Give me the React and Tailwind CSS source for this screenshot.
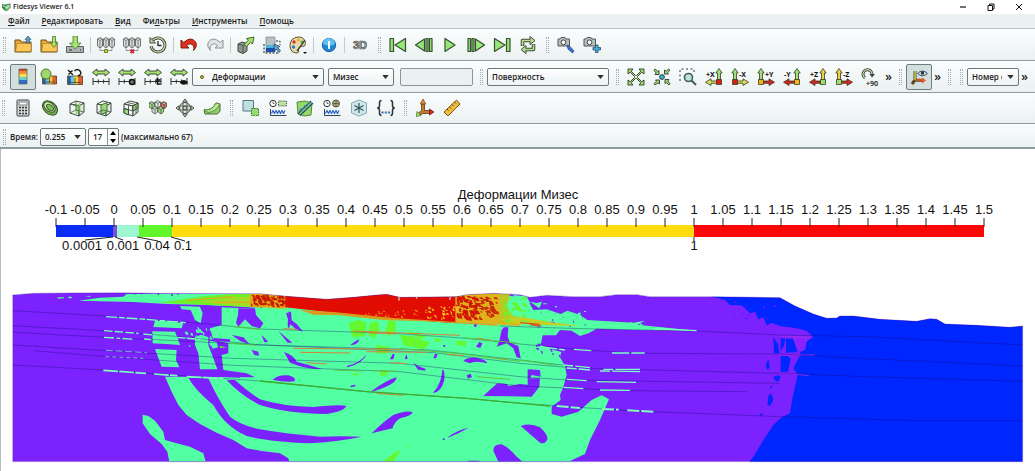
import React from 'react';

const OUT = '#3f4a3f';
const LIME = '#a6e36e';

const Icon = ({ children }) => (
    <svg viewBox="0 0 18 18" className="w-[18px] h-[18px] shrink-0" fill="none" stroke={OUT} strokeWidth="1" strokeLinejoin="round">{children}</svg>
);

const FolderShape = () => (
    <>
        <path d="M1 16V4h5l1.500 2H17v10z" fill="#e9a93a" stroke="#6b4a14" />
        <path d="M1.500 15.500L3 7.500h14v8z" fill="#fbc75a" stroke="#a3741d" strokeWidth=".6" />
    </>
);

const Cube = ({ front = '#eef3ee', side = '#dfe8df', top = '#f7faf7' }) => (
    <>
        <path d="M2 5l6-3 8 2-5 3z" fill={top} />
        <path d="M2 5l9 2v10l-9-3z" fill={front} />
        <path d="M11 7l5-3v9l-5 4z" fill={side} />
    </>
);

const Servers = () => (
    <>
        {[0.5, 6.5, 12.5].map((x) => (
            <g key={x}>
                <path d={`M${x} 3l2.500-1.500L${x + 5} 3v7l-2.500 2L${x} 10z`} fill="#d5dada" stroke="#555" strokeWidth=".8" />
                <path d={`M${x} 3l2.500 1.500L${x + 5} 3M${x + 2.5} 4.500V12`} stroke="#666" strokeWidth=".7" />
            </g>
        ))}
    </>
);

const ColorSwatch = ({ x, y, w, h }) => (
    <g stroke="none">
        <rect x={x} y={y} width={w} height={h} fill="#2a5caa" />
        <rect x={x + w * 0.22} y={y} width={w * 0.26} height={h} fill="#65c7d8" />
        <rect x={x + w * 0.44} y={y} width={w * 0.3} height={h} fill="#f5cf3c" />
        <rect x={x + w * 0.72} y={y} width={w * 0.28} height={h} fill="#e0622a" />
        <rect x={x} y={y} width={w} height={h} fill="none" stroke="#4a3a2a" strokeWidth=".7" />
        <path d={`M${x + 2} ${y + h - 2}h${w - 4}M${x + w / 2} ${y + 2}v${h - 3}`} stroke="#333" strokeWidth=".7" />
    </g>
);

const RangeIcon = ({ badge }) => (
    <Icon>
        <path d="M0.500 4.500L5 1v2h8V1l4.500 3.500L13 8V6H5v2z" fill={LIME} />
        <path d="M1 10v7M17 10v7M1 13.500h16M6.300 11.500v4M11.600 11.500v4" stroke="#333" />
        {badge === 'custom' && <circle cx="14" cy="14" r="2.500" fill="#777" stroke="#111" strokeWidth="1.400" />}
        {badge === 'time' && <path d="M13.500 9.500v6.500h3M12 12h4.500" stroke="#111" strokeWidth="1.700" />}
        {badge === 'visible' && <path d="M10 14.500q3.500-4 7.500 0q-4 3.500-7.500 0z" fill="#111" stroke="#111" />}
    </Icon>
);

const PlayTri = ({ d }) => <path d={d} fill="#98e67a" stroke="#36502f" strokeWidth="1.200" />;

const Camera = () => (
    <>
        <path d="M1 3h2l1-1.500h4L9 3h3.500v7H1z" fill="#b9c0c0" stroke="#555" />
        <circle cx="6.500" cy="6.300" r="2.400" fill="#f3f6f6" stroke="#444" />
    </>
);

const ArrowOut = ({ turn, inward }) => (
    <g transform={`rotate(${turn} 9 9)`}>
        {inward
            ? <path d="M1 2.200L2.200 1l2.600 2.600L6 2.500V6.500H2l1.200-1.500z" fill={LIME} stroke="#2e332b" strokeWidth=".9" />
            : <path d="M7.500 8.500L3.200 4.200 1 6V1h5L4.200 3.200 8.500 7.500z" fill={LIME} stroke="#2e332b" strokeWidth=".9" />}
    </g>
);

const axisColors = {
    X: { box: '#dd1c14', up: '#9ddf7c', flat: '#d5df58' },
    Y: { box: '#f2b223', up: '#9ddf7c', flat: '#d3261e' },
    Z: { box: '#97e26e', up: '#e9d04a', flat: '#d3261e' },
};

function AxisIcon({ label, left }) {
    const c = axisColors[label[1]];
    return (
        <Icon>
            <g transform={left ? 'translate(18 0) scale(-1 1)' : undefined} stroke="#3b3a22" strokeWidth=".8">
                <path d="M5 13h7v-2.200l5.500 3.400L12 17.500v-2.200H5z" fill={c.flat} />
                <path d="M2.500 13V5H.800L4 .500 7.200 5H5.500v8z" fill={c.up} />
                <rect x="1.500" y="11.500" width="5" height="5" fill={c.box} />
            </g>
            <text x={left ? 1 : 8} y="8.500" fill="#111" stroke="none" className="text-[7px] font-bold font-['Noto_Sans']">{label}</text>
        </Icon>
    );
}

const ICONS = {
    open: <Icon><FolderShape /><path d="M14 0l3 3.500h-1.500V7h-3V3.500H11z" fill="#5b9cc2" stroke="#2b5e7c" strokeWidth=".7" /></Icon>,
    load: <Icon><FolderShape /><path d="M12.500.500h3V7h2L14 11.500 10.500 7h2z" fill={LIME} stroke="#4f7a2c" strokeWidth=".8" /></Icon>,
    save: <Icon><path d="M.500 10.500h17v6H.500z" fill="#a9b1b1" stroke="#5a6060" /><path d="M3 14h3M14 14h1" stroke="#333" /><path d="M7 0h4.500v7H15l-5.800 6L3.500 7H7z" fill={LIME} stroke="#4f7a2c" strokeWidth=".8" /></Icon>,
    connect: <Icon><Servers /><path d="M3 12.500v2h12v-2" stroke="#777" strokeWidth=".8" /><rect x="7.500" y="13.500" width="3" height="3" fill="#cddc39" stroke="#6f7d1c" /></Icon>,
    disconnect: <Icon><Servers /><path d="M3 12.500v2h12v-2" stroke="#777" strokeWidth=".8" /><path d="M7.500 13.500l3.500 3.500M11 13.500L7.500 17" stroke="#c4263a" strokeWidth="1.800" /></Icon>,
    history: <Icon><path d="M3.500 4.500A7 7 0 1 1 2 10" stroke="#454a3b" strokeWidth="3" /><path d="M3.500 4.500A7 7 0 1 1 2 10" stroke="#cfd8ae" strokeWidth="1.200" /><path d="M1 1.500v5.500h5.500z" fill="#cfd8ae" /><path d="M9 5v4.500h3.500" stroke="#333" strokeWidth="1.400" /></Icon>,
    undo: <Icon><path d="M1 4v8h8L6.500 9.500q4-3.500 7 .500 1 2 0 4.500 4-3.500 2.500-8Q11-.500 3.700 6.500z" fill="#e0301e" stroke="#7c1a10" /></Icon>,
    redo: <Icon><path d="M17 4v8H9l2.500-2.500q-4-3.500-7 .500-1 2 0 4.500Q.500 11 2 6.500 7-.500 14.300 6.500z" fill="#dfe5e5" stroke="#8a9393" /></Icon>,
    extract: <Icon><path d="M1 8l4-2 5 1.500v7.500l-4 2.500-5-2z" fill="#8b958d" /><path d="M1 8l5 1.500L10 7.500M6 9.500v8" strokeWidth=".8" /><path d="M7 8.500l4.500-4.300L9.500 2.500 17 1l-1.500 7-1.800-1.700L9.500 10.500z" fill={LIME} stroke="#42662c" /></Icon>,
    select: <Icon><rect x="3" y="1" width="9" height="15" fill="#b8c1c6" stroke="#777" strokeWidth=".6" /><rect x="3" y="9" width="9" height="3" fill="#4bb2d9" stroke="none" /><rect x="3" y="12" width="9" height="4" fill="#1d4fa8" stroke="none" /><path d="M1 8v9h14M13 5h4v4" stroke="#222" strokeDasharray="2 1.500" /><path d="M11 8l6 2.500-2.300 1L17.500 15l-1.800 1.500-2.500-3.500L11.500 15z" fill="#6fa0c9" stroke="#24486b" strokeWidth=".8" /></Icon>,
    palette: <Icon><path d="M9 1Q1 2 1 9.500T8 17q2.500-.300 1.500-3-.500-3 3-3.500 4 .500 4-3Q15.500.500 9 1z" fill="#e8d9a9" stroke="#5d5136" /><g stroke="none"><circle cx="5" cy="6" r="1.700" fill="#d8322a" /><circle cx="9.500" cy="4" r="1.600" fill="#f0b028" /><circle cx="4.500" cy="11" r="1.700" fill="#2f7ad0" /><circle cx="13" cy="6" r="1.500" fill="#4fae3c" /></g><path d="M8 15l8-11" stroke="#444" strokeWidth="1.300" /><path d="M14 16h4l-2 2z" fill="#111" stroke="none" /></Icon>,
    info: <Icon><circle cx="9" cy="9" r="6.700" fill="#1f86d6" stroke="#1762a3" /><path d="M3 8a6 6 0 0 1 12 0q-6 3-12 0z" fill="#62c0ef" stroke="none" /><path d="M9 5v8" stroke="#fff" strokeWidth="2" /></Icon>,
    stereo: <Icon><text x="2" y="13" fill="#a9b2b2" stroke="#3c3c3c" strokeWidth=".6" className="text-[11px] font-bold font-['Liberation_Sans']">3D</text></Icon>,
    first: <Icon><PlayTri d="M1 2.500h3.500v13H1z" /><PlayTri d="M16.500 2.500v13L6 9z" /></Icon>,
    prev: <Icon><PlayTri d="M9.500 3v12L.500 9z" /><PlayTri d="M11 2.500h2v13h-2zM14.500 2.500h2.500v13h-2.500z" /></Icon>,
    play: <Icon><PlayTri d="M4 2.500v13L14 9z" /></Icon>,
    next: <Icon><PlayTri d="M8.500 3v12l9-6z" /><PlayTri d="M1 2.500h2.500v13H1zM5 2.500h2v13H5z" /></Icon>,
    last: <Icon><PlayTri d="M13.500 2.500H17v13h-3.500z" /><PlayTri d="M1.500 2.500v13L12 9z" /></Icon>,
    loop: <Icon><path d="M3.500 10V4.500h8M14.500 8v5.500h-8" stroke="#3e4a34" strokeWidth="3.600" /><path d="M11 .500l5 4-5 4zM7 9.500l-5 4 5 4z" fill="#b9dd94" /><path d="M3.500 9.500V4.500h8M14.500 8.500v5h-8" stroke="#b9dd94" strokeWidth="1.600" /></Icon>,
    camFind: <Icon><Camera /><path d="M10 9l3 1.500 4 4.500-1.500 2-4.500-4z" fill="#3f6fd6" stroke="#243f8c" strokeWidth=".7" /></Icon>,
    camAdd: <Icon><Camera /><path d="M12.500 9h2.500v2.500h2.500V14H15v2.500h-2.500V14H10v-2.500h2.500z" fill="#48a6d6" stroke="#24506e" strokeWidth=".8" /></Icon>,

    legend: <Icon><g stroke="none"><rect x="5" y="1" width="8" height="3" fill="#d5432b" /><rect x="5" y="3" width="8" height="3" fill="#f0912f" /><rect x="5" y="6" width="8" height="3" fill="#f7dc55" /><rect x="5" y="9" width="8" height="3" fill="#6cd0c7" /><rect x="5" y="12" width="8" height="4" fill="#2d6fc6" /></g><rect x="5" y="1" width="8" height="15" stroke="#5a6060" strokeWidth=".7" /></Icon>,
    editMap: <Icon><ColorSwatch x={2.5} y={8} w={14} h={8} /><circle cx="6" cy="6" r="5" fill="#9fd86c" stroke="#4f7a2c" /></Icon>,
    rescale: <Icon><ColorSwatch x={1.5} y={8} w={15} h={8.5} /><path d="M2 2l5 5M2.500 6.500l4-4M8.500 3q3-3 5.500 0t-2 5" stroke="#1b1b1b" strokeWidth="1.400" /></Icon>,
    range: <RangeIcon />,
    rangeCustom: <RangeIcon badge="custom" />,
    rangeTime: <RangeIcon badge="time" />,
    rangeVisible: <RangeIcon badge="visible" />,
    reset: <Icon>{[0, 90, 180, 270].map((a) => <ArrowOut key={a} turn={a} />)}</Icon>,
    zoomData: <Icon>{[0, 90, 180, 270].map((a) => <ArrowOut key={a} turn={a} inward />)}<circle cx="9" cy="9" r="2.400" fill="#35b6ae" stroke="#246" /></Icon>,
    zoomBox: <Icon><path d="M1 13V1h14v4" stroke="#333" strokeDasharray="2 2.500" /><circle cx="9.500" cy="9.500" r="4" fill="#bfe3dd" stroke="#3c5f5a" strokeWidth="1.600" /><path d="M12.500 12.500l4.500 4.500" stroke="#4a5553" strokeWidth="2" /></Icon>,
    xPlus: <AxisIcon label="+X" left />,
    xMinus: <AxisIcon label="-X" />,
    yPlus: <AxisIcon label="+Y" />,
    yMinus: <AxisIcon label="-Y" left />,
    zPlus: <AxisIcon label="+Z" left />,
    zMinus: <AxisIcon label="-Z" />,
    rotate: <Icon><path d="M4 10A4.500 4.500 0 1 1 11 6.500" stroke="#3f463c" strokeWidth="3" /><path d="M4 10A4.500 4.500 0 1 1 11 6.500" stroke="#c3d6ab" strokeWidth="1.200" /><path d="M8.500 6h5.500l-3 3.500z" fill="#3f463c" stroke="none" /><text x="5" y="17.500" fill="#111" stroke="none" className="text-[7px] font-semibold font-['Noto_Sans']">+90</text></Icon>,
    axes: <Icon><path d="M5 3v9M5 12l9 .500M5 12l-3 4" stroke="#574a20" strokeWidth="3" /><path d="M5 3v9" stroke="#bcd85f" strokeWidth="1.500" /><path d="M5 12h8" stroke="#e0622a" strokeWidth="1.500" /><path d="M12 9.500l4 3-4 3z" fill="#e8572a" stroke="none" /><path d="M7.500 5.500q5-5 10 0q-5 4.500-10 0z" fill="#d6dede" stroke="#3c5068" /><circle cx="12.500" cy="5" r="1.700" fill="#25344a" stroke="none" /></Icon>,

    calculator: <Icon><rect x="3" y="1" width="12" height="16" rx="1" fill="#d4dada" stroke="#3d4242" /><rect x="5" y="3" width="8" height="3" fill="#fff" stroke="#555" strokeWidth=".7" /><path d="M5 8.500h8M5 11.500h8M5 14.500h8" stroke="#333" strokeWidth="1.600" strokeDasharray="2 1" /></Icon>,
    contour: <Icon><ellipse cx="9" cy="9" rx="8.500" ry="6" transform="rotate(40 9 9)" fill="#6fae4b" stroke="#35502a" /><ellipse cx="8.500" cy="8" rx="6.500" ry="4.200" transform="rotate(40 8.500 8)" fill="#cfe8b4" stroke="#3f5f33" /><ellipse cx="9" cy="8.500" rx="4" ry="2.300" transform="rotate(40 9 8.500)" fill="#7cbf58" stroke="#3f5f33" /></Icon>,
    clip: <Icon><Cube /><path d="M7.500 6.200L12.500 3.500v9L7.500 16z" fill="#9bd87a" stroke="none" /><path d="M2 5l9 2v10M2 14l6-3 8 2M8 2v9" stroke="#4a5a4a" strokeWidth=".8" /></Icon>,
    slice: <Icon><Cube /><path d="M6 6l6-2.500v9.500L6 15.500z" fill="#9bd87a" stroke="#456d33" /><path d="M2 14l6-3 8 2" strokeWidth=".8" /></Icon>,
    threshold: <Icon><Cube /><path d="M11 7l5-3v5l-5 3zM2 9.500l4.500 1.200V16L2 14z" fill="#9bd87a" /><path d="M6.500 6v10M2 9.500l9 2.500M5 3.500l9 2v9" strokeWidth=".8" /></Icon>,
    subset: <Icon>{[[0, 3, '#9bd87a'], [6, 2, '#e4e9e4'], [12, 3, '#e06a5c'], [3, 8, '#d7ded7'], [9, 8, '#9bd87a']].map(([x, y, c]) => <path key={`${x}-${y}`} d={`M${x} ${y + 1}l2.500-1.500L${x + 5.5} ${y + 1}v4l-2.500 2L${x} ${y + 5}zM${x} ${y + 1}l3 1.200 2.500-1.200M${x + 3} ${y + 2.2}v4.500`} fill={c} strokeWidth=".7" />)}</Icon>,
    glyph: <Icon><circle cx="9" cy="9" r="5.500" fill="#dfe8dc" /><path d="M9 0l2.200 3H6.800zM9 18l2.200-3H6.800zM0 9l3-2.200v4.400zM18 9l-3-2.200v4.400z" fill="#dfe9d8" /><path d="M4 7h10M4 11h10M7 4v10M11 4v10" strokeWidth=".8" /><circle cx="9" cy="9" r="2" fill="#c3cfbf" /></Icon>,
    warp: <Icon><path d="M1 11q8 1 12-7l4 1v7q-1 2-3 3H2z" fill="#8fcf6b" stroke="#4a6a38" /><path d="M1 11q8 1 12-7l4 1Q13 13 5 13.500z" fill="#b4ea8c" stroke="#4f7a3c" strokeWidth=".8" /></Icon>,

    group: <Icon><rect x="1" y="1.500" width="10.500" height="10.500" fill="#bfe0e3" stroke="#55777b" /><rect x="9.500" y="9.500" width="7" height="7" fill="#92dd6d" stroke="#3c6a2c" strokeDasharray="1.500 1" /></Icon>,
    plotTime: <Icon><circle cx="4" cy="4.500" r="3.200" fill="#fff" stroke="#333" /><path d="M4 2.500v2h1.500" strokeWidth=".8" /><path d="M9.500 2h8v5h-8z" fill="#b9e29a" stroke="#445" strokeDasharray="1 1" /><path d="M1.500 16.500h16M1.500 10v6.500" stroke="#345" /><path d="M2.500 14.500l1.500-3 1.500 3 1.500-3 1.500 3 1.500-3 1.500 3 1.500-3 1.500 3 1.500-3" stroke="#2a62c9" strokeWidth="1.200" /></Icon>,
    plotLine: <Icon><path d="M1 3l8-1 7 2-1 12-7 1-6-2z" fill="#95d968" stroke="#588a3a" /><path d="M2 15L15 2M4 16.500L17 4" stroke="#224b74" strokeWidth="1.200" /><path d="M3 13l2-4 1 2 3-5 1 2 4-5" stroke="#3b80c8" /></Icon>,
    plotSel: <Icon><circle cx="4" cy="4.500" r="3.200" fill="#fff" stroke="#333" /><path d="M4 2.500v2h1.500" strokeWidth=".8" /><circle cx="13" cy="4.500" r="3.500" fill="#b9a978" stroke="#554" /><path d="M10 4.500h6M13 1v7" strokeWidth=".7" /><path d="M1.500 16.500h16M1.500 10v6.500" stroke="#345" /><path d="M2.500 14.500l1.500-3 1.500 3 1.500-3 1.500 3 1.500-3 1.500 3 1.500-3 1.500 3 1.500-3" stroke="#2a62c9" strokeWidth="1.200" /></Icon>,
    freeze: <Icon><path d="M1.500 4L9 1l7.500 3v10L9 17l-7.500-3z" fill="#cde7ea" stroke="#86aab0" /><path d="M9 4v10M4.500 6.500l9 5M13.500 6.500l-9 5" stroke="#33535c" strokeWidth="1.200" /></Icon>,
    braces: <Icon><path d="M4.500 1.500Q2.500 1.500 2.500 4v2.500Q2.500 9 .500 9q2 0 2 2.500V14q0 2.500 2 2.500M13.500 1.500q2 0 2 2.500v2.500q0 2.500 2 2.500-2 0-2 2.500V14q0 2.500-2 2.500" stroke="#333" strokeWidth="1.500" /><path d="M4.500 13.500h9" stroke="#2f6db5" strokeWidth="2" strokeDasharray="2 1.300" /></Icon>,
    triad: <Icon><path d="M5.500 5h3v6.500H14v3H7l-3 1.500-1.500-2 3-2.500z" fill="#c07a2c" stroke="#5e3d17" strokeWidth=".8" /><path d="M7 0l2.800 5H4.200z" fill="#e08a3a" stroke="#74431a" strokeWidth=".7" /><path d="M18 13l-4.500-3v6z" fill="#d3261e" stroke="#6e1612" strokeWidth=".7" /><path d="M0 17.500l1-5 4 4z" fill={LIME} stroke="#42662c" strokeWidth=".7" /></Icon>,
    ruler: <Icon><path d="M1 13L13.500 1 17 5 5 17z" fill="#eebb3c" stroke="#7d5c14" /><path d="M4 10l1.500 1.500M6.500 8L8 9.500M9 5.500L10.500 7M11.500 3L13 4.500" stroke="#54400f" /></Icon>,
};

const fileTools = [
    [['open', 'Открыть'], ['load', 'Загрузить состояние'], ['save', 'Сохранить данные']],
    [['connect', 'Подключиться'], ['disconnect', 'Отключиться'], ['history', 'Восстановить']],
    [['undo', 'Отменить'], ['redo', 'Повторить']],
    [['extract', 'Извлечь'], ['select', 'Выделить'], ['palette', 'Палитра']],
    [['info', 'Справка']],
    [['stereo', '3D']],
];
const playTools = [['first', 'В начало'], ['prev', 'Назад'], ['play', 'Пуск'], ['next', 'Вперёд'], ['last', 'В конец'], ['loop', 'Повтор']];
const cameraTools = [['camFind', 'Найти камеру'], ['camAdd', 'Добавить камеру']];
const colorTools = [['editMap', 'Изменить цвета'], ['rescale', 'Выбрать палитру'], ['range', 'Диапазон по данным'], ['rangeCustom', 'Задать диапазон'], ['rangeTime', 'Диапазон по времени'], ['rangeVisible', 'Видимый диапазон']];
const viewTools = [['reset', 'Показать всё'], ['zoomData', 'К данным'], ['zoomBox', 'К области'], ['xPlus', '+X'], ['xMinus', '-X'], ['yPlus', '+Y'], ['yMinus', '-Y'], ['zPlus', '+Z'], ['zMinus', '-Z'], ['rotate', 'Повернуть на 90']];
const filterTools = [['calculator', 'Калькулятор'], ['contour', 'Изолинии'], ['clip', 'Отсечение'], ['slice', 'Срез'], ['threshold', 'Порог'], ['subset', 'Подмножество'], ['glyph', 'Глифы'], ['warp', 'Деформация']];
const dataTools = [['group', 'Группа'], ['plotTime', 'График по времени'], ['plotLine', 'График по линии'], ['plotSel', 'График выделения'], ['freeze', 'Заморозить'], ['braces', 'Программный фильтр']];
const measureTools = [['triad', 'Оси'], ['ruler', 'Линейка']];

const menu = [['Ф', 'айл'], ['Р', 'едактировать'], ['В', 'ид'], ['Фи', 'льтры', 'л'], ['И', 'нструменты'], ['П', 'омощь']];

const ToolButton = ({ tool, wide, active }) => (
    <button
        aria-label={tool[1]}
        className={`h-[26px] shrink-0 flex items-center justify-center rounded-xs ${wide ? 'w-[27px]' : 'w-[26px]'} ${active ? 'bg-[#d3dede] border border-[#6f7c7c]' : ''}`}
    >
        {ICONS[tool[0]]}
    </button>
);

const Tools = ({ items, wide }) => items.map((t) => <ToolButton key={t[0]} tool={t} wide={wide} />);

const Grip = () => (
    <span className="w-3 shrink-0 flex justify-center gap-px">
        <span className="h-4 border-l border-dotted border-[#a3adad]"></span>
        <span className="h-4 border-l border-dotted border-[#a3adad]"></span>
    </span>
);

const Separator = () => <span className="w-[5px] shrink-0 flex justify-center"><span className="w-px h-4 bg-[#c3cbcb]"></span></span>;

const More = () => <button aria-label="Ещё" className="w-[11px] shrink-0 text-xs leading-4 text-center font-semibold">»</button>;

function Combo({ id, label, value, className, padding = 'pl-1', dot }) {
    return (
        <span className={`relative shrink-0 h-[18px] ${className}`}>
            <select id={id} aria-label={label} defaultValue={value} className={`appearance-none w-full h-full pr-4 ${padding} border border-[#6d7878] rounded-xs bg-linear-to-b from-white to-[#edf2f2] text-[8px] leading-4 font-semibold`}>
                <option>{value}</option>
            </select>
            {dot && <span className="absolute left-2 top-[7px] w-1 h-1 rounded-full bg-[#b9b534] border border-[#6b6a22]"></span>}
            <svg viewBox="0 0 8 5" className="absolute right-[5px] top-[7px] w-[7px] h-1 pointer-events-none"><path d="M0 0h8L4 5z" fill="#2b3030" /></svg>
        </span>
    );
}

const Bar = ({ children, className = '' }) => (
    <div className={`flex items-center overflow-hidden border-b border-[#8f9c9c] bg-linear-to-b from-[#fafdfd] to-[#ebf1f1] ${className}`}>{children}</div>
);

/* ---------- LEGEND ---------- */
const STEP = 29;
const X0 = 56;
const tickLabels = Array.from({ length: 33 }, (_, i) => String(Math.round((i * 0.05 - 0.1) * 100) / 100));
const bands = [
    [56, 57, '#0a2cf5'], [113, 4, '#7d4fd8'], [117, 22, '#9df8d2'], [139, 33, '#62f52c'], [172, 522, '#ffdc0d'], [694, 290, '#fb0807'],
];

function Legend() {
    return (
        <svg viewBox="1 0 1034 130" className="block w-full h-auto text-[13px] font-normal font-['Liberation_Sans',Arial,sans-serif]" textAnchor="middle" fill="#111">
            <text x="518" y="49">Деформации Мизес</text>
            {bands.map(([x, w, c]) => <rect key={x} x={x} y="75" width={w} height="12" fill={c} />)}
            {tickLabels.map((t, i) => (
                <g key={t}>
                    <path d={`M${X0 + i * STEP} 68v9`} stroke="#222" />
                    <text x={X0 + i * STEP} y="64">{t}</text>
                </g>
            ))}
            <path d="M85 90l28-3M115 87l8 3M137 87l21 4M171 87l14 4M694 87v4" stroke="#222" fill="none" />
            <text x="82" y="100">0.0001</text>
            <text x="123" y="100">0.001</text>
            <text x="157" y="100">0.04</text>
            <text x="183" y="100">0.1</text>
            <text x="694" y="100">1</text>
        </svg>
    );
}

/* ---------- STRAIN FIELD ---------- */
// small blocks scattered over a rectangle, same every render
function scatter(x, y, w, h, count, size, seed) {
    let s = seed;
    const rnd = () => {
        s = (s * 16807) % 2147483647;
        return s / 2147483647;
    };
    let d = '';
    for (let i = 0; i < count; i++) {
        const bw = Math.round(size * (0.5 + rnd()));
        const bh = Math.round(size * (0.5 + rnd()));
        d += `M${Math.round(x + rnd() * w)} ${Math.round(y + rnd() * h)}h${bw}l${Math.round(bw / 2)} ${bh}h${-bw}z`;
    }
    return d;
}

const DOMAIN = 'M38 45L100 40 350 38 480 40 780 41 850 48 980 58 1060 52 1130 45 1160 43 1200 52 1370 50 1400 44 1480 40 1560 44 1590 52 1640 46 1720 50 1800 50 1850 44 1910 44 1950 50 2130 50 2340 53 2385 78 2440 102 2480 115 2510 114 2520 108 2560 108 2640 118 2750 124 2790 116 2810 118 2835 132 2930 136 3030 142 3068 138V545H38z';

const MINT_BODY = 'M665 82L715 84 780 84 860 60 1500 45 1575 52 1590 72 1600 90 1640 88 1682 102 1702 92 1740 104 1762 120 1900 128 1935 122 1912 134 2000 143 2090 152 1900 150 1790 146 1765 160 1740 168 1715 152 1680 150 1668 166 1628 166 1622 195 1662 210 1684 216 1680 232 1695 258 1700 285 1690 320 1680 345 1682 360 1655 380 1655 402 1685 410 1735 395 1775 360 1805 346 1827 358 1800 420 1770 480 1755 522 1705 545H868L865 535 840 520 780 512 740 505 700 480 650 458 600 432 560 405 535 375 515 335 495 290 765 292 740 280 670 270 665 225 685 220 685 190 640 180 630 145 665 135z';

const PURPLE_HOLES = [
    'M565 293Q585 330 640 375 675 440 740 468 800 484 930 490 1020 484 1085 470 1020 468 960 470 860 462 780 448 720 435 690 410 655 360 625 295z',
    'M680 300Q720 345 780 375 860 400 980 402 1030 395 1040 378 1020 372 940 381 850 380 780 358 740 332 705 300z',
    'M818 300Q830 284 865 286 890 292 884 304 860 308 818 300z',
    'M852 216Q880 225 890 245 930 255 965 267 920 268 870 248z',
    'M1040 258Q1080 250 1100 222 1090 250 1042 262z',
    'M1050 196Q1065 182 1078 178 1075 195 1050 196z',
    'M1115 333Q1160 300 1190 292 1188 316 1115 335z',
    'M1115 460Q1150 425 1180 405 1215 390 1238 396 1235 408 1200 415 1180 430 1178 445 1150 458z',
    'M1343 472Q1370 450 1406 443 1380 458 1347 472z',
    'M1328 476l6-1 1 4-7 1z',
    'M1300 337Q1325 310 1327 270 1335 265 1333 300 1325 335 1300 339z',
    'M1450 348L1475 325 1492 310 1520 312 1525 318 1560 312 1583 314 1583 268 1620 270 1622 290 1595 285 1590 295 1620 295 1618 320 1595 350z',
    'M1390 243Q1400 230 1430 233 1460 240 1462 250 1425 240 1410 250 1400 245z',
    'M1428 200l10-14 9 4-6 14zM1400 286l12-5 4 10-12 5z',
    'M1498 182L1505 150 1512 142H1525L1523 170 1530 188 1555 198 1562 235 1550 232 1540 205 1520 190 1490 200z',
    'M1562 438Q1590 428 1620 442 1645 465 1642 478 1635 495 1620 488 1580 470z',
    'M1480 512Q1480 492 1505 493 1530 505 1550 530L1568 545H1495z',
    'M1404 542h34v3h-34z',
    'M865 95l8 0 2 25-8 25-4-5zM858 98l5 0 8 20 20 15 18 22-22-8-20-18zM785 165l20 20-12 2zM835 153l42 35-14 0z',
    'M1170 238l8-16 6 0-4 16zM1214 238l5-16 4 14zM1240 248l14 10 22 8 0 6-22-3zM1300 235l5-14 8 2-5 12zM1270 132l4 4M1422 132l8 0 0 8-8 0z',
    'M715 85H765L768 105 790 130 780 145 755 138 735 118 715 140 708 128 714 105z',
    'M695 165L730 172 748 192 722 184zM755 210l20 5 2 12-14-2z',
    'M1050 318l14-4 4 4-14 4zM1330 195l6 0 0 5-6 0z',
];

const MINT_ISLANDS = [
    'M465 122L500 124 550 130 545 145 460 141z',
    'M457 154L525 155 535 180 540 195 500 192 458 190z',
    'M465 207L530 210 528 240 538 262 485 260z',
    'M585 170L605 164 625 172 625 195 640 235 652 268 600 268 595 220 585 195z',
    'M540 78L600 80 608 100 602 130 585 120 572 90 545 88z',
    'M428 404L445 408 465 422 490 455 495 480 530 490 570 500 610 520 617 545H508L502 515 485 492 450 462 428 430z',
    'M586 150l15-3 8 10-18 3zM628 182l22 4 4 16-16 4z',
    'M235 62L300 53 370 50 380 42 480 41 780 42V84L700 79 600 74 500 72 400 66z',
    'M172 52l20 0 0 3-18 1zM205 50l10 0 0 5-10 0zM252 49l20-2 0 3zM1590 65l20 4 16-4-8 20zM1580 60l10 6-8 20z',
    'M1630 70h10v3h-10zM1665 78h6v4h-6zM1752 93h6v3h-6zM1734 98h8v6h-8z',
];

const STRATA = [
    'M38 92L318 108 600 130 780 147 1180 160 1400 175 1560 192 1780 212 1935 220 2340 222 2600 236 3068 258',
    'M38 137L310 152 540 170 780 195 1290 210 1560 240 1770 265 2340 280 2600 290 3068 304',
    'M38 157L320 172 690 190 1300 218 1560 250 1700 262',
    'M38 195L320 212 700 235 1200 250 1560 290 1700 300 2340 310',
    'M100 212L320 230 700 256 1200 275 1560 318 1880 332 2240 335',
    'M38 255L310 270 780 303 1100 335 1400 355 1560 370 1900 393 2340 410 2750 422 3068 422',
    'M1500 138L1740 146 2090 153 2340 165 2600 170 3068 195',
];

function StrainField() {
    return (
        <svg viewBox="3 0 3102 573" className="block w-full h-auto" role="img" aria-label="Поле деформаций">
            <defs>
                <clipPath id="domain"><path d={DOMAIN} /></clipPath>
            </defs>
            <g clipPath="url(#domain)">
                <path d={DOMAIN} fill="#7b22ff" />

                {/* blue right flank */}
                <path d="M2120 46H3080V550H2245L2262 528 2290 480 2320 435 2345 412 2370 400 2378 350 2390 300 2392 282 2380 265 2402 222 2395 200 2440 172 2420 152 2390 145 2340 138 2315 128 2300 136 2290 112 2275 118 2265 95 2250 100 2225 76 2190 75 2175 60z" fill="#0026ff" />
                <path d="M2320 172l14 20 4 28-16 0zM2300 245l6-4 3 20-6 10-5-10zM2320 290l16-4 6 6-8 14-8-4zM2310 320l5-2 2 4-5 4zM2306 345l8-4 6 18-10 20-8-6zM2278 405l10-6 2 4-8 5zM2342 175h14l-4 22-10 16zM2342 228h20l10 8-8 40h-22z" fill="#0026ff" />
                <path d="M2358 176l22 0 12 40-34 2z" fill="#0026ff" />
                <path d="M2380 172h40l-6 36-12 6-14-22zM2340 168l90 4M2340 225h104M2340 280l86 6" fill="#8a22ff" stroke="#a02bf0" strokeWidth="3" />

                <path d={MINT_BODY} fill="#52ffa2" />
                {MINT_ISLANDS.map((d) => <path key={d} d={d} fill="#52ffa2" />)}
                {PURPLE_HOLES.map((d) => <path key={d} d={d} fill="#7b22ff" />)}

                {/* green patches inside the body */}
                <path d="M1046 130l30-10 24 8-6 40-36 4zM1108 130l26-6 4 30-16 20-16-8zM1166 120l20 4 2 30-20 14-14-10zM1128 195l40 6-4 18-32 2zM1200 165l40 4 50 20-20 20-30-8-28-4zM1220 150l60 20-20 6zM1142 275l20-4 0 14-24 4zM1370 182l30 2-4 14-26-2zM1050 280l30 2-10 6zM1300 172l30 10-20 4zM1148 545l40-30 16-4-26 34zM1220 502l6-10 2 6zM660 198l20 4-20 2z" fill="#66f82e" />

                {/* near-surface bands */}
                <path d="M480 68L560 56 620 48 700 42H780V82L640 76z" fill="#6cf22a" />
                <path d="M600 66L700 52 780 48V80L700 76z" fill="#a5dc25" />
                <path d="M640 68L756 66M560 62L700 50" stroke="#d8b31c" strokeWidth="4" fill="none" />
                <path d="M750 42H860L858 86 750 80z" fill="#e0a915" />
                <path d="M856 46L1375 40 1370 130 1180 116 1000 98 856 82z" fill="#e10c02" />
                <path d="M900 90L1000 96 1180 114 1370 126 1480 132 1500 138 1280 124 1150 120 1020 106 940 104z" fill="#d99a1d" />
                <path d="M1366 40H1500L1530 42 1510 90 1530 124 1560 118V138L1366 125z" fill="#dfb31a" />
                <path d="M1500 42H1530L1520 80 1540 108 1560 112V130L1500 124z" fill="#b9c924" />
                <path d="M1530 60l20 20 30-15 10 30-40 5zM1540 45l40 4 10 20-40-10z" fill="#52ffa2" />
                <path d="M1500 118L1560 110 1650 126 1740 138 1650 136 1560 132z" fill="#c7cf22" />
                <path d="M1560 128l60 5M1590 134l30 4" stroke="#d4552a" strokeWidth="4" />
                <path d={scatter(752, 44, 96, 30, 70, 7, 31)} fill="#c81a04" />
                <path d={scatter(1366, 46, 60, 66, 80, 8, 57)} fill="#d41404" />
                <path d={scatter(1424, 48, 64, 68, 42, 7, 93)} fill="#c92a08" />
                <path d={scatter(1280, 78, 90, 38, 34, 5, 17)} fill="#f0c21c" />
                <path d={scatter(1080, 88, 200, 20, 28, 4, 71)} fill="#e8861a" />
                <path d={scatter(1510, 50, 60, 70, 26, 8, 11)} fill="#6cf22a" />
                <path d={scatter(1600, 95, 160, 45, 12, 4, 29)} fill="#7b22ff" />
                <path d={scatter(1780, 124, 150, 10, 12, 4, 41)} fill="#52ffa2" />
                <path d={scatter(390, 38, 150, 6, 9, 4, 23)} fill="#5530c0" />
                <path d={scatter(2200, 60, 120, 60, 14, 5, 19)} fill="#5a18ff" />
                <path d={scatter(1590, 185, 90, 40, 14, 6, 37)} fill="#7b22ff" />
                <path d={scatter(545, 140, 100, 60, 20, 6, 83)} fill="#52ffa2" />

                {/* strata lines */}
                <g fill="none" strokeWidth="3">
                    {STRATA.map((d) => <path key={d} d={d} stroke="#1b0a78" opacity=".35" />)}
                    <path d="M1060 153L1380 166M1430 174l40 6M850 146l40 2M880 205l320 3M900 217l150 2M1480 234l40 4M920 248l60 4M1130 340l80 6M1100 158l90 4M1340 223l50 4M1100 215l180 2M1170 248l50 3" stroke="#d8823a" />
                    <path d="M780 303L1100 335 1400 355 1650 378" stroke="#3fae2a" strokeWidth="4" />
                    <path d="M700 140l80 8M690 190l80 6M1200 206l170 14 190 24M1390 173l160 16M1560 240l110 16M1120 272l70 2M1430 290l100 8M1000 270l90 3" stroke="#5fc23a" />
                </g>
                <g fill="none" stroke="#7dffc0" strokeWidth="4">
                    <path d="M318 110L438 118 560 128" strokeDasharray="34 5 18 4" />
                    <path d="M312 152L416 160M430 162l30 3M530 172l70 6" strokeDasharray="26 6" />
                    <path d="M312 172L404 178M432 177l22 2" strokeDasharray="30 7 12 6" />
                    <path d="M318 211L440 218" strokeDasharray="20 9" strokeWidth="2" />
                    <path d="M316 230L430 235" strokeDasharray="12 9" strokeWidth="2" />
                    <path d="M310 271L438 280M462 282l70 5M560 290l110 5" strokeDasharray="44 4" strokeWidth="5" />
                    <path d="M1620 200l75 10M1722 208l55 4M1836 219h98" strokeDasharray="52 6" />
                    <path d="M1690 255l80 8M1700 264l70 6M1810 268l110 0M1800 273l120 2" strokeDasharray="30 6 90 2" />
                    <path d="M1700 298l60 4M1790 305l118 2M1690 322l60 4M1800 330l90 1" />
                    <path d="M1670 378l70 6M1806 387l50 2M1882 391l80 4" strokeDasharray="36 6" strokeWidth="6" />
                    <path d="M1960 146l130 6" strokeWidth="4" />
                </g>
                <path d="M640 178l50 4M620 285l100 4" stroke="#7b22ff" strokeWidth="8" />
            </g>
            <path d="M1197 50v12M1350 50v10M1250 50v6" stroke="#fff" strokeWidth="3" />
            <path d={DOMAIN} fill="none" stroke="#3b10a0" strokeWidth="2" opacity=".5" />
        </svg>
    );
}

export default function App() {
    return (
        <div className="min-h-screen bg-white text-[#1c2020] text-[8px] leading-3 font-semibold font-['Open_Sans','Noto_Sans',sans-serif]">
            <header className="flex items-center h-[14px] px-[2px] bg-white">
                <svg viewBox="0 0 10 10" className="w-[9px] h-[9px]">
                    <path d="M0 1l4 1 1 3-2 4-3-4z" fill="#3c8f56" />
                    <path d="M4 2l5-1v4L5 9 3 6z" fill="#7fcf7a" stroke="#23593a" strokeWidth=".8" />
                    <path d="M1 3l4 2 4-2" stroke="#fff" strokeWidth=".8" fill="none" />
                </svg>
                <h1 className="ml-[2px] text-[7px]">Fidesys Viewer 6.1</h1>
                <div className="ml-auto flex">
                    <button aria-label="Свернуть" className="w-7 flex justify-center"><svg viewBox="0 0 8 8" className="w-2 h-2"><path d="M1 4h6" stroke="#111" strokeWidth="1.200" /></svg></button>
                    <button aria-label="Развернуть" className="w-7 flex justify-center"><svg viewBox="0 0 8 8" className="w-2 h-2" fill="none" stroke="#111"><path d="M1 2.500h4.500v5H1zM2.500 2.500V1H7v5H5.500" /></svg></button>
                    <button aria-label="Закрыть" className="w-7 flex justify-center"><svg viewBox="0 0 8 8" className="w-2 h-2"><path d="M1 1l6 6M7 1L1 7" stroke="#111" /></svg></button>
                </div>
            </header>

            <nav className="flex items-center gap-3 h-[15px] px-2 bg-[#ebf1f1] border-b border-[#b9c3c3]">
                {menu.map(([key, rest, mid]) => (
                    <a key={rest} href="#" className="whitespace-nowrap">
                        {mid ? <>{key}<u>{mid}</u>{rest.slice(1)}</> : <><u>{key}</u>{rest}</>}
                    </a>
                ))}
            </nav>

            <Bar className="h-8">
                <span className="-ml-[2px] flex"><Grip /></span>
                {fileTools.map((group, i) => (
                    <React.Fragment key={i}>
                        {i > 0 && <Separator />}
                        <Tools items={group} />
                    </React.Fragment>
                ))}
                <Grip />
                <Tools items={playTools} />
                <Grip />
                <Tools items={cameraTools} />
            </Bar>

            <Bar className="h-8">
                <span className="-ml-[2px] flex"><Grip /></span>
                <ToolButton tool={['legend', 'Цветовая шкала']} active />
                <Tools items={colorTools} />
                <Combo label="Поле" value="Деформации" className="w-[132px]" padding="pl-[19px]" dot />
                <Combo label="Компонента" value="Мизес" className="w-[66px] ml-1" padding="pl-1" />
                <input aria-label="Значение" className="w-[73px] h-[18px] ml-[6px] mr-[2px] shrink-0 border border-[#8b9696] rounded-xs bg-[#ebf1f1]" />
                <Grip />
                <Combo label="Представление" value="Поверхность" className="w-[122px] mr-[2px]" />
                <Grip />
                <Tools items={viewTools} />
                <More />
                <Grip />
                <ToolButton tool={['axes', 'Показать оси']} active />
                <More />
                <Grip />
                <Grip />
                <Combo label="Номер" value="Номер с" className="w-[52px]" />
                <More />
            </Bar>

            <Bar className="h-[31px]">
                <span className="-ml-[3px] flex"><Grip /></span>
                <Tools items={filterTools} wide />
                <Grip />
                <Tools items={dataTools} wide />
                <Grip />
                <Tools items={measureTools} wide />
            </Bar>

            <Bar className="h-[25px] pt-[2px] border-b-2">
                <span className="-ml-[2px] flex"><Grip /></span>
                <label htmlFor="time" className="mr-[2px]">Время:</label>
                <Combo id="time" value="0.255" className="w-[46px]" />
                <span className="ml-[2px] w-[31px] h-[18px] flex border border-[#6d7878] rounded-xs bg-white">
                    <input id="frame" aria-label="Шаг" defaultValue="17" className="min-w-0 w-[19px] pl-1 border-r border-[#8b9696]" />
                    <span className="flex-1 flex flex-col">
                        <button aria-label="Больше" className="flex-1 flex items-center justify-center"><svg viewBox="0 0 6 4" className="w-[6px] h-1"><path d="M0 4l3-4 3 4z" /></svg></button>
                        <button aria-label="Меньше" className="flex-1 flex items-center justify-center"><svg viewBox="0 0 6 4" className="w-[6px] h-1"><path d="M0 0l3 4 3-4z" /></svg></button>
                    </span>
                </span>
                <label htmlFor="frame" className="ml-[2px]">(максимально 67)</label>
            </Bar>

            <main className="pt-px border-l border-[#b4bcbc]">
                <Legend />
                <StrainField />
            </main>
        </div>
    );
}
